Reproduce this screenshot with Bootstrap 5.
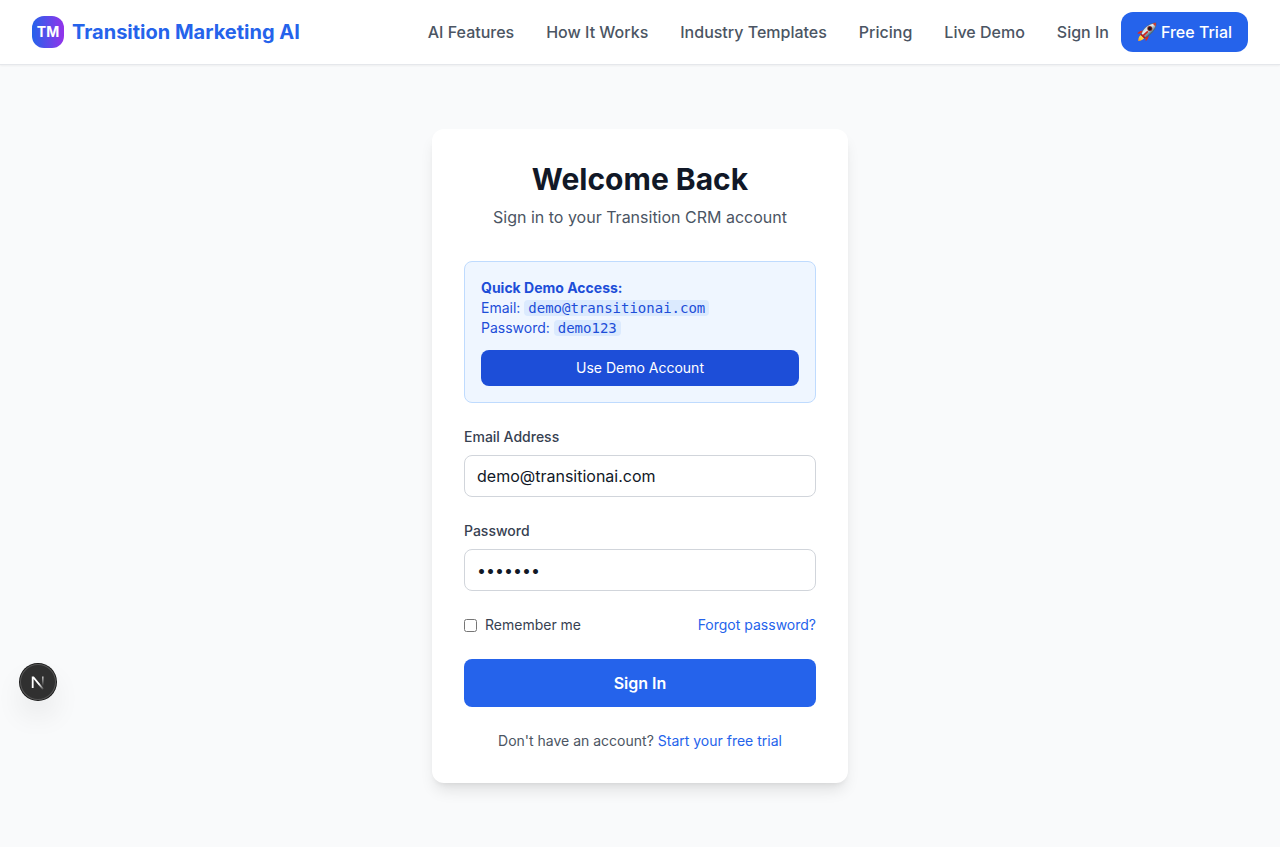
<!DOCTYPE html>
<html lang="en">
<head>
<meta charset="utf-8">
<meta name="viewport" content="width=device-width, initial-scale=1">
<title>Sign In - Transition Marketing AI</title>
<link href="https://cdn.jsdelivr.net/npm/bootstrap@5.3.0/dist/css/bootstrap.min.css" rel="stylesheet">
<style>
  body { font-family: Inter, "Liberation Sans", sans-serif; font-size: 16px; line-height: 24px; color: #111827; background: #f9fafb; }
  a { color: #2563eb; text-decoration: none; }
  a:hover { color: #1d4ed8; }
  .site-header { --bs-navbar-padding-y: 12px; --bs-navbar-nav-link-padding-x: 0; border-bottom: 1px solid #e5e7eb; box-shadow: 0 1px 2px rgba(0, 0, 0, .05); }
  .site-header .navbar-brand { font-size: 20px; line-height: 28px; font-weight: 700; color: #2563eb; padding: 0; }
  .brand-mark { width: 32px; height: 32px; border-radius: 12px; background: linear-gradient(90deg, #2563eb, #9333ea); font-size: 14px; line-height: 20px; }
  .site-header .nav-link { font-weight: 500; color: #4b5563; padding-top: 0; padding-bottom: 0; }
  .site-header .navbar-nav { gap: 12px; }
  .nav-links { gap: 32px; }
  .btn { --bs-btn-line-height: 24px; --bs-btn-bg: #2563eb; --bs-btn-color: #fff; --bs-btn-hover-bg: #1d4ed8; --bs-btn-hover-color: #fff; border: 0; font-weight: 500; }
  .btn-trial { padding: 8px 16px; border-radius: 12px; }
  .btn-demo { --bs-btn-bg: #1d4ed8; --bs-btn-line-height: 20px; font-size: 14px; font-weight: 400; padding: 8px 12px; border-radius: 8px; margin-top: 12px; }
  .btn-submit { padding: 12px 16px; border-radius: 8px; font-weight: 600; }
  .auth-area { padding: 64px 16px; }
  .auth-card { max-width: 416px; padding: 32px; border: 0; border-radius: 12px; box-shadow: 0 10px 15px -3px rgba(0, 0, 0, .1), 0 4px 6px -4px rgba(0, 0, 0, .1); }
  .auth-card h1 { font-size: 30px; line-height: 36px; font-weight: 700; color: #111827; }
  .lede { color: #4b5563; margin-bottom: 32px; }
  .small-copy, .form-label { font-size: 14px; line-height: 20px; }
  .form-label { font-weight: 500; color: #374151; }
  .demo-box { padding: 16px; border: 1px solid #bfdbfe; border-radius: 8px; background: #eff6ff; color: #1d4ed8; }
  .demo-box code { font-family: "DejaVu Sans Mono", monospace; font-size: 14px; color: #1d4ed8; background: #dbeafe; border-radius: 4px; padding: 0 4px; }
  .form-control { height: 42px; padding: 8px 12px; line-height: 24px; border-color: #d1d5db; border-radius: 8px; color: #111827; }
  .text-soft { color: #4b5563; }
  .text-label { color: #374151; }
  .dev-badge { left: 20px; bottom: 147px; width: 36px; height: 36px; border: 0; padding: 0; border-radius: 50%; background: #303030; box-shadow: 0 0 0 1px #171717, inset 0 0 0 1px #555, 0 16px 32px -8px rgba(0, 0, 0, .24); }
</style>
</head>
<body>
<header>
  <nav class="navbar navbar-expand-lg site-header bg-white">
    <div class="container-fluid px-3 px-lg-4">
      <div class="d-flex flex-wrap flex-grow-1 align-items-center justify-content-between px-2">
        <a class="navbar-brand d-flex align-items-center gap-2 m-0" href="#">
          <span class="brand-mark d-flex align-items-center justify-content-center text-white">TM</span>
          <span>Transition Marketing AI</span>
        </a>
        <button class="navbar-toggler" type="button" data-bs-toggle="collapse" data-bs-target="#mainNav" aria-controls="mainNav" aria-expanded="false" aria-label="Toggle navigation"><span class="navbar-toggler-icon"></span></button>
        <div class="collapse navbar-collapse flex-grow-0" id="mainNav">
          <div class="navbar-nav align-items-lg-center">
            <div class="nav-links d-flex flex-column flex-lg-row">
              <a class="nav-link" href="#">AI Features</a>
              <a class="nav-link" href="#">How It Works</a>
              <a class="nav-link" href="#">Industry Templates</a>
              <a class="nav-link" href="#">Pricing</a>
              <a class="nav-link" href="#">Live Demo</a>
              <a class="nav-link" href="#">Sign In</a>
            </div>
            <a class="btn btn-trial d-flex align-items-center gap-1" href="#">
              <svg width="20" height="20" viewBox="0 0 20 20" aria-hidden="true">
                <defs>
                  <linearGradient id="hull" x1="7" y1="5" x2="13" y2="12" gradientUnits="userSpaceOnUse"><stop stop-color="#a9c3d0"/><stop offset=".45" stop-color="#e4edf1"/><stop offset="1" stop-color="#54707f"/></linearGradient>
                  <linearGradient id="flame" x1="6" y1="13" x2="1" y2="19" gradientUnits="userSpaceOnUse"><stop stop-color="#fff27a"/><stop offset=".6" stop-color="#ffc928"/><stop offset="1" stop-color="#ff8a1c"/></linearGradient>
                </defs>
                <path d="M6.8 8.6C4 8.5 1.800 9.600.4 11.800L4.600 11.600Z" fill="#e3261b"/>
                <path d="M11.600 12.600C11.900 15.300 10.800 17.500 8.800 19.200L8.200 15.100Z" fill="#e3261b"/>
                <path d="M4.600 12.400C2.600 13.300 1.300 15.500 1 19C4.500 18.700 6.800 17.400 7.600 15.200Z" fill="url(#flame)"/>
                <path d="M4.200 11.500L8.500 15.600L7.300 16.700L3.300 12.700Z" fill="#b91414"/>
                <path d="M4.400 11.700C6 6.500 10.800 2 18.900.7C19.800 6.300 14.500 12.300 8.500 15.600Z" fill="url(#hull)" stroke="#44545e" stroke-width=".5"/>
                <path d="M15.500 1.600L18.900.7C19.100 2 19 3.200 18.500 4.500Z" fill="#c7392f"/>
                <path d="M6.500 13.300L10.300 9.900" stroke="#d22019" stroke-width="1.600" stroke-linecap="round"/>
                <circle cx="12.800" cy="6.600" r="2.500" fill="#8e201b"/>
                <circle cx="12.800" cy="6.600" r="1.700" fill="#15181c"/>
              </svg>
              <span>Free Trial</span>
            </a>
          </div>
        </div>
      </div>
    </div>
  </nav>
</header>

<main class="auth-area">
  <div class="card auth-card mx-auto">
    <h1 class="text-center mb-2">Welcome Back</h1>
    <p class="lede text-center">Sign in to your Transition CRM account</p>

    <div class="demo-box small-copy mb-4">
      <div><strong>Quick Demo Access:</strong></div>
      <div>Email: <code>demo@transitionai.com</code></div>
      <div>Password: <code>demo123</code></div>
      <button class="btn btn-demo w-100 d-block" type="button">Use Demo Account</button>
    </div>

    <form>
      <div class="mb-4">
        <label class="form-label d-block mb-2" for="email">Email Address</label>
        <input class="form-control" type="email" id="email" value="demo@transitionai.com">
      </div>
      <div class="mb-4">
        <label class="form-label d-block mb-2" for="password">Password</label>
        <input class="form-control" type="password" id="password" value="demo123">
      </div>
      <div class="d-flex align-items-center justify-content-between small-copy mb-4">
        <div class="d-flex align-items-center gap-2">
          <input type="checkbox" id="remember">
          <label class="text-label" for="remember">Remember me</label>
        </div>
        <a href="#">Forgot password?</a>
      </div>
      <button class="btn btn-submit w-100 d-block" type="submit">Sign In</button>
    </form>
    <p class="small-copy text-center text-soft mt-4 mb-0">Don't have an account? <a href="#">Start your free trial</a></p>
  </div>
</main>

<button class="dev-badge position-fixed d-flex align-items-center justify-content-center" type="button" aria-label="Open developer tools">
  <svg width="36" height="36" viewBox="0 0 36 36" fill="none">
    <defs>
      <linearGradient id="stemFade" x1="0" y1="12" x2="0" y2="22" gradientUnits="userSpaceOnUse"><stop stop-color="#fff" stop-opacity=".75"/><stop offset="1" stop-color="#fff" stop-opacity="0"/></linearGradient>
      <linearGradient id="slashFade" x1="19" y1="20" x2="23" y2="25" gradientUnits="userSpaceOnUse"><stop stop-color="#fff"/><stop offset="1" stop-color="#fff" stop-opacity=".15"/></linearGradient>
    </defs>
    <path d="M11.800 24V12.400H13.900L23.800 24.600L22.500 25.800L13.600 15V24Z" fill="url(#slashFade)"/>
    <path d="M22 12.400H23.600V22H22Z" fill="url(#stemFade)"/>
  </svg>
</button>
<script src="https://cdn.jsdelivr.net/npm/bootstrap@5.3.0/dist/js/bootstrap.bundle.min.js"></script>
</body>
</html>
